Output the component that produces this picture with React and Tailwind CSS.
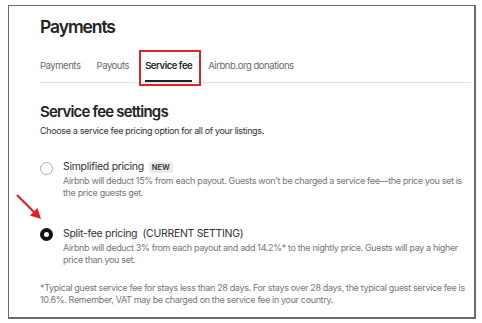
export default function App() {
  return (
    <div className="w-[482px] h-[323px] bg-white relative" style={{ fontFamily: "Inter, 'Noto Sans', sans-serif" }}>
      <div className="absolute left-[8px] top-[5px] w-[468px] h-[314px] border border-[#6b6b6b] border-r-2 border-b-2 bg-white pl-[31px] pr-[3px]">
        <h1 className="mt-[11px] text-[17.5px] font-semibold text-[#222] leading-[20px] tracking-[-1.1px]">Payments</h1>
        <div className="mt-[23px] flex items-start gap-[16px] border-b border-[#e3e3e3] text-[9.5px] leading-[12px] text-[#6a6a6a] tracking-[-0.45px]">
          <div className="pb-[10px]">Payments</div>
          <div className="pb-[10px]">Payouts</div>
          <div className="relative pb-[8px] border-b-2 border-[#222] text-[#222] font-semibold">
            Service fee
            <div className="absolute -left-[6px] -right-[9px] -top-[10px] -bottom-[6px] border-2 border-[#e02424]"></div>
          </div>
          <div className="pb-[10px]">Airbnb.org donations</div>
        </div>
        <h2 className="mt-[20px] text-[15px] font-semibold text-[#222] leading-[18px] tracking-[-0.8px]">Service fee settings</h2>
        <p className="mt-[3.5px] text-[9px] text-[#333] leading-[12px] tracking-[-0.35px]">Choose a service fee pricing option for all of your listings.</p>

        <div className="mt-[23.5px] flex gap-[10px]">
          <div className="w-[13px] h-[13px] rounded-full border border-[#aaa] mt-[1.5px] shrink-0"></div>
          <div>
            <div className="flex items-center gap-[5px] text-[10.5px] text-[#333] leading-[14px] tracking-[-0.3px]">
              Simplified pricing
              <span className="bg-[#ebebeb] text-[7.5px] font-bold text-[#444] px-[3px] rounded-[2px] leading-[11px] tracking-[0px]">NEW</span>
            </div>
            <p className="text-[9px] text-[#777] leading-[12px] mt-[1px] tracking-[-0.35px]">Airbnb will deduct 15% from each payout. Guests won't be charged a service fee—the price you set is the price guests get.</p>
          </div>
        </div>

        <div className="mt-[28px] flex gap-[10px]">
          <div className="w-[13px] h-[13px] rounded-full border-[4px] border-[#111] mt-[1px] shrink-0"></div>
          <div>
            <div className="text-[10.5px] text-[#333] leading-[14px] tracking-[-0.3px]">Split-fee pricing&nbsp; (CURRENT SETTING)</div>
            <p className="text-[9px] text-[#777] leading-[12px] mt-[1px] tracking-[-0.35px]">Airbnb will deduct 3% from each payout and add 14.2%* to the nightly price. Guests will pay a higher price than you set.</p>
          </div>
        </div>

        <p className="mt-[16px] text-[9px] text-[#777] leading-[12px] tracking-[-0.35px]">*Typical guest service fee for stays less than 28 days. For stays over 28 days, the typical guest service fee is 10.6%. Remember, VAT may be charged on the service fee in your country.</p>
      </div>
      <svg className="absolute left-[14px] top-[192px]" width="30" height="30" viewBox="0 0 30 30">
        <line x1="3" y1="3" x2="22" y2="22" stroke="#e02020" strokeWidth="2.2" />
        <polygon points="27,27 16,23.5 23.5,16" fill="#e02020" />
      </svg>
    </div>
  );
}
